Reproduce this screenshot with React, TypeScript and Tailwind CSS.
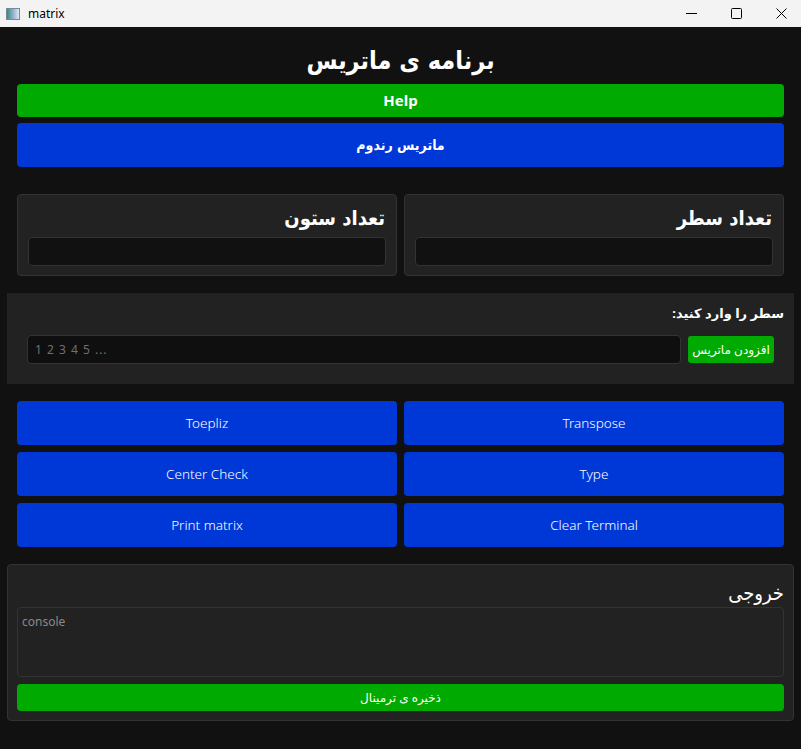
const font = { fontFamily: '"Noto Sans", "DejaVu Sans", sans-serif' };
const fa = { fontFamily: '"DejaVu Sans Condensed", "DejaVu Sans", sans-serif' };

function TitleBar() {
  return (
    <div className="h-[27px] bg-[#f3f3f3] flex items-center text-[12px] text-black shrink-0">
      <div className="ml-[6px] w-[14px] h-[12px] border border-[#7a8a9a] bg-gradient-to-r from-[#2f8f6f] via-[#8fb0d0] to-[#e0e8f0]" />
      <span className="ml-[8px]">matrix</span>
      <div className="ml-auto mr-[-3px] flex items-center h-full">
        <div className="w-[45px] h-full flex items-center justify-center">
          <svg width="11" height="11" viewBox="0 0 11 11">
            <path d="M0 5.5 H11" stroke="#000" strokeWidth="1" />
          </svg>
        </div>
        <div className="w-[45px] h-full flex items-center justify-center">
          <svg width="11" height="11" viewBox="0 0 11 11">
            <rect x="0.5" y="0.5" width="10" height="10" rx="1" fill="none" stroke="#000" strokeWidth="1" />
          </svg>
        </div>
        <div className="w-[45px] h-full flex items-center justify-center">
          <svg width="11" height="11" viewBox="0 0 11 11">
            <path d="M0.5 0.5 L10.5 10.5 M10.5 0.5 L0.5 10.5" stroke="#000" strokeWidth="1" />
          </svg>
        </div>
      </div>
    </div>
  );
}

function SizeBox({ label }: { label: string }) {
  return (
    <div className="flex-1 h-[82px] bg-[#222222] border border-[#333333] rounded-[4px] px-[10px] pt-[9px] flex flex-col">
      <div dir="rtl" className="text-[20px] font-bold text-white leading-[28px] pr-[1px]" style={fa}>{label}</div>
      <div className="mt-[5px] h-[29px] bg-[#111111] border border-[#333333] rounded-[4px]" />
    </div>
  );
}

function BlueButton({ label }: { label: string }) {
  return (
    <button className="h-[44px] bg-[#0038d8] rounded-[4px] text-white text-[13.5px] font-light">{label}</button>
  );
}

export default function App() {
  return (
    <div className="w-[801px] h-[749px] flex flex-col overflow-hidden" style={font}>
      <TitleBar />
      <div className="flex-1 bg-[#111111] px-[7px] flex flex-col">
        <div className="mx-[10px]">
          <h1 dir="rtl" className="h-[57px] pt-[16px] text-center text-[25px] font-bold text-white leading-[36px]" style={fa}>
            برنامه ی ماتریس
          </h1>
          <button className="w-full h-[33px] bg-[#00aa00] rounded-[4px] text-white text-[15px] font-bold">Help</button>
          <button dir="rtl" className="mt-[6px] w-full h-[44px] bg-[#0038d8] rounded-[4px] text-white text-[14px] font-bold" style={fa}>
            ماتریس رندوم
          </button>
          <div className="mt-[27px] flex gap-[7px]">
            <SizeBox label="تعداد ستون" />
            <SizeBox label="تعداد سطر" />
          </div>
        </div>

        <div className="mt-[17px] h-[91px] bg-[#222222] px-[20px] pt-[11px]">
          <div dir="rtl" className="-mr-[10px] text-[13px] font-bold text-white leading-[18px]">سطر را وارد کنید:</div>
          <div className="mt-[13px] flex items-center gap-[7px]">
            <input
              className="flex-1 h-[29px] bg-[#0f0f0f] border border-[#333333] rounded-[4px] px-[7px] text-[12px] text-white placeholder:text-[#6f6f6f] outline-none tracking-[1px]"
              placeholder="1 2 3 4 5 ..."
            />
            <button dir="rtl" className="w-[86px] h-[27px] bg-[#00aa00] rounded-[3px] text-white text-[12px]">
              افزودن ماتریس
            </button>
          </div>
        </div>

        <div className="mt-[17px] mx-[10px] grid grid-cols-2 gap-[7px]">
          <BlueButton label="Toepliz" />
          <BlueButton label="Transpose" />
          <BlueButton label="Center Check" />
          <BlueButton label="Type" />
          <BlueButton label="Print matrix" />
          <BlueButton label="Clear Terminal" />
        </div>

        <div className="mt-[17px] h-[157px] bg-[#222222] border border-[#333333] rounded-[4px] px-[9px] pt-[15px]">
          <div dir="rtl" className="text-[20px] text-white leading-[26px]" style={fa}>خروجی</div>
          <textarea
            className="mt-[1px] block w-full h-[70px] bg-[#222222] border border-[#333333] rounded-[4px] px-[4px] py-[5px] text-[12px] text-white placeholder:text-[#8a8a8a] outline-none resize-none"
            placeholder="console"
          />
          <button dir="rtl" className="mt-[7px] w-full h-[27px] bg-[#00aa00] rounded-[4px] text-white text-[12px]">
            ذخیره ی ترمینال
          </button>
        </div>
      </div>
    </div>
  );
}
